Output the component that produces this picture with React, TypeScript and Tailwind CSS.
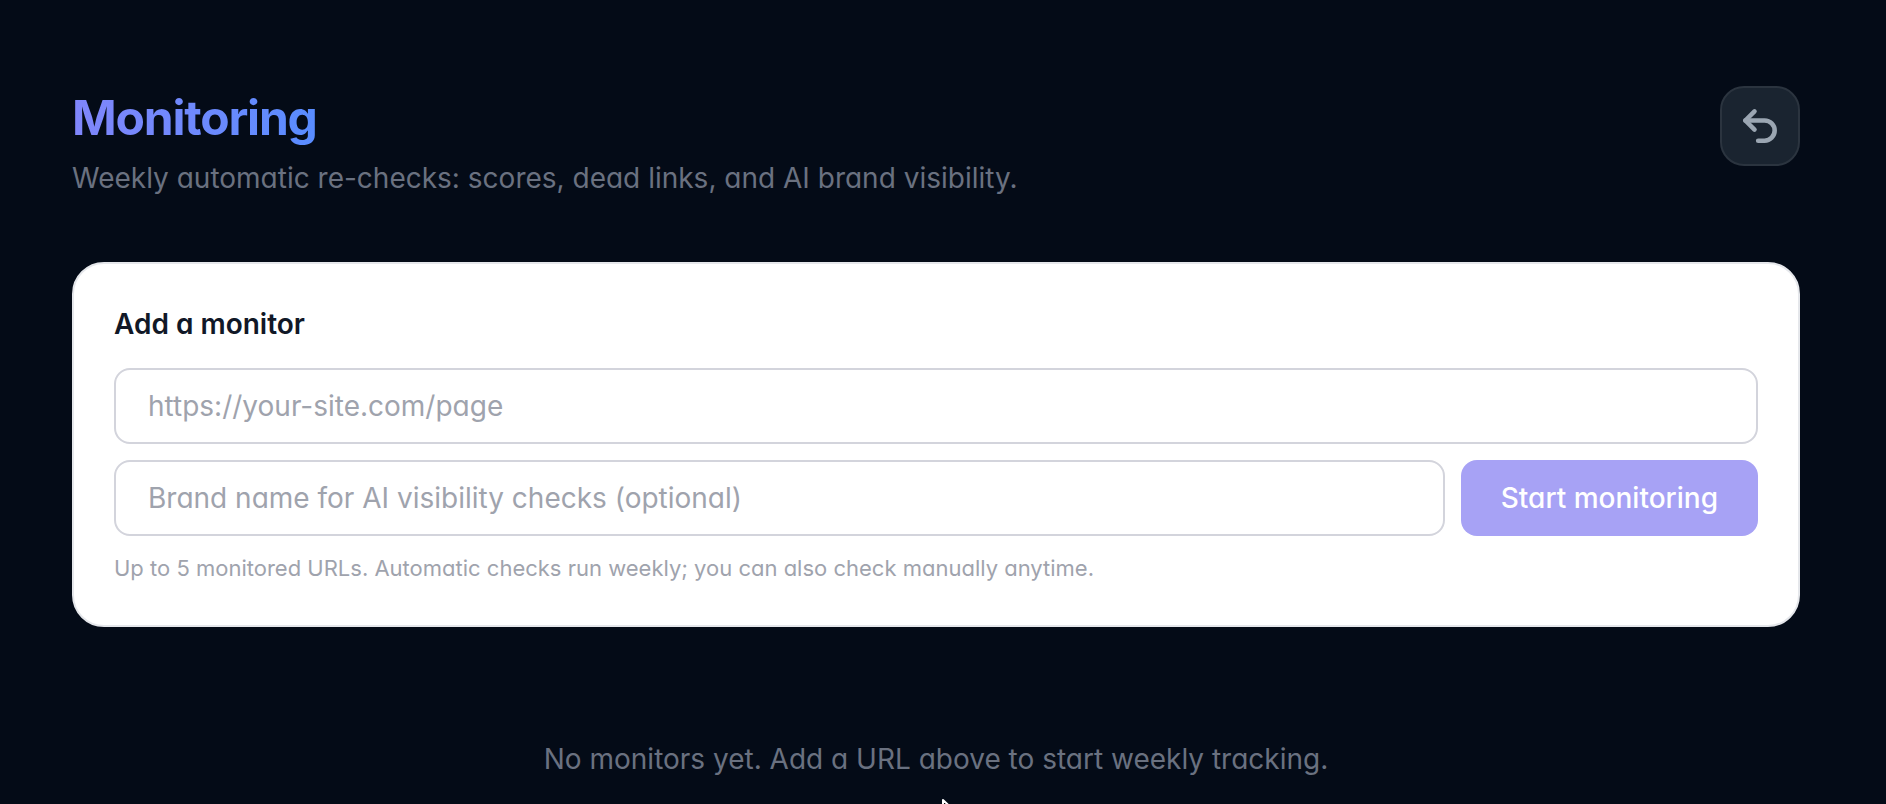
import { useState } from 'react'
import type { FormEvent } from 'react'
import { Undo2 } from 'lucide-react'

const inputClass =
  'h-[76px] w-full min-w-0 rounded-2xl border-2 border-[#d3d4dc] bg-white px-8 text-[28px] leading-10 text-gray-900 placeholder:text-[#9fa3ad] focus:outline-none'

function PageHeader() {
  return (
    <header className="mb-16 flex items-start justify-between">
      <div>
        <h1 className="w-fit bg-linear-to-r from-[#8086fb] to-[#588cff] bg-clip-text text-5xl leading-16 font-bold tracking-tight text-transparent">
          Monitoring
        </h1>
        <p className="mt-2 text-[28px] leading-10 text-[#6a7180]">
          Weekly automatic re-checks: scores, dead links, and AI brand visibility.
        </p>
      </div>
      <button
        type="button"
        aria-label="Back"
        className="flex size-20 shrink-0 items-center justify-center rounded-3xl border-2 border-[#2b343f] bg-[#1a2430] text-[#9ba6b2]"
      >
        <Undo2 className="size-11" strokeWidth={2.5} />
      </button>
    </header>
  )
}

function AddMonitorForm() {
  const [url, setUrl] = useState('')
  const [brand, setBrand] = useState('')

  const submit = (e: FormEvent) => {
    e.preventDefault()
    setUrl('')
    setBrand('')
  }

  return (
    <form onSubmit={submit} className="rounded-4xl border-2 border-[#e5e7eb] bg-white p-10">
      <h2 className="mb-6 text-[28px] leading-10 font-semibold text-[#111827]">Add a monitor</h2>
      <div className="flex flex-col gap-4">
        <input
          type="url"
          aria-label="Page URL"
          placeholder="https://your-site.com/page"
          value={url}
          onChange={(e) => setUrl(e.target.value)}
          className={inputClass}
        />
        <div className="flex gap-4">
          <input
            type="text"
            aria-label="Brand name"
            placeholder="Brand name for AI visibility checks (optional)"
            value={brand}
            onChange={(e) => setBrand(e.target.value)}
            className={inputClass}
          />
          <button
            type="submit"
            disabled={!url}
            className="shrink-0 rounded-2xl bg-[#4f46e5] px-10 text-[28px] leading-10 font-medium text-white disabled:bg-[#a7a2f5]"
          >
            Start monitoring
          </button>
        </div>
      </div>
      <p className="mt-4 text-[22px] leading-[33px] text-[#9fa3ad]">
        Up to 5 monitored URLs. Automatic checks run weekly; you can also check manually anytime.
      </p>
    </form>
  )
}

export default function App() {
  return (
    <div className="relative h-screen overflow-hidden bg-[#040b17] pt-[86px] pr-[86px] pl-[72px] font-['Inter',sans-serif] [font-feature-settings:'cv11'] [font-variation-settings:'opsz'_14]">
      <PageHeader />
      <main>
        <AddMonitorForm />
        <p className="mt-28 text-center text-[28px] leading-10 text-[#6a7180]">
          No monitors yet. Add a URL above to start weekly tracking.
        </p>
      </main>
      <svg
        aria-hidden="true"
        viewBox="0 0 24 34"
        className="pointer-events-none absolute top-[798px] left-[941px] h-[34px] w-6"
      >
        <path d="M2 2v24l6-5 4 9 4-2-4-9h8z" fill="#000" stroke="#fff" strokeWidth="2" strokeLinejoin="round" />
      </svg>
    </div>
  )
}
